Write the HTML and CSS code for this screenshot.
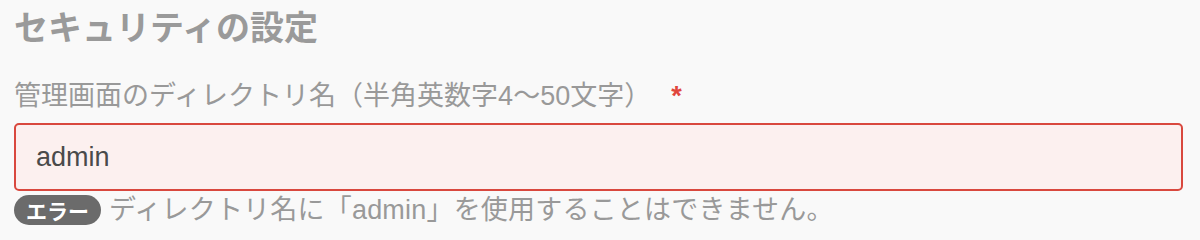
FILE: index.html
```html
<!DOCTYPE html>
<html lang="ja">
<head>
<meta charset="utf-8">
<link rel="stylesheet" href="styles.css">
</head>
<body>
<section class="panel">
  <h1 class="title">セキュリティの設定</h1>
  <label class="label" for="dir">管理画面のディレクトリ名（半角英数字4〜50文字）<span class="req">*</span></label>
  <input class="field" id="dir" type="text" value="admin">
  <div class="error">
    <span class="badge">エラー</span>
    <span class="msg">ディレクトリ名に「admin」を使用することはできません。</span>
  </div>
</section>
</body>
</html>
```
FILE: styles.css
```css
html, body {
  margin: 0;
  padding: 0;
  background: #f9f9f9;
}
body {
  font-family: "Liberation Sans", "Noto Sans CJK JP", sans-serif;
}
.panel {
  padding: 0 17px 0 14px;
}
.title {
  margin: 0;
  padding-top: 8px;
  font-size: 34px;
  line-height: 40px;
  font-weight: bold;
  color: #9a9a9a;
}
.label {
  display: block;
  margin-top: 31px;
  font-size: 27px;
  line-height: 34px;
  color: #999;
}
.req {
  color: #e0463c;
  margin-left: 20px;
  font-weight: bold;
}
.field {
  display: block;
  box-sizing: border-box;
  width: 100%;
  height: 68px;
  margin: 10px 0 0;
  padding: 0 20px;
  border: 2px solid #d9483e;
  border-radius: 5px;
  background: #fcf0ef;
  font-family: "Liberation Sans", "Noto Sans CJK JP", sans-serif;
  font-size: 27px;
  color: #4a4a4a;
  outline: none;
}
.error {
  display: flex;
  align-items: center;
  gap: 8px;
  margin-top: 4px;
}
.badge {
  display: inline-flex;
  align-items: center;
  height: 30px;
  padding: 0 12px;
  border-radius: 15px;
  background: #6b6b6b;
  color: #fff;
  font-size: 21px;
  font-weight: bold;
}
.msg {
  font-size: 27px;
  line-height: 30px;
  letter-spacing: 0.2px;
  color: #999;
}
```
